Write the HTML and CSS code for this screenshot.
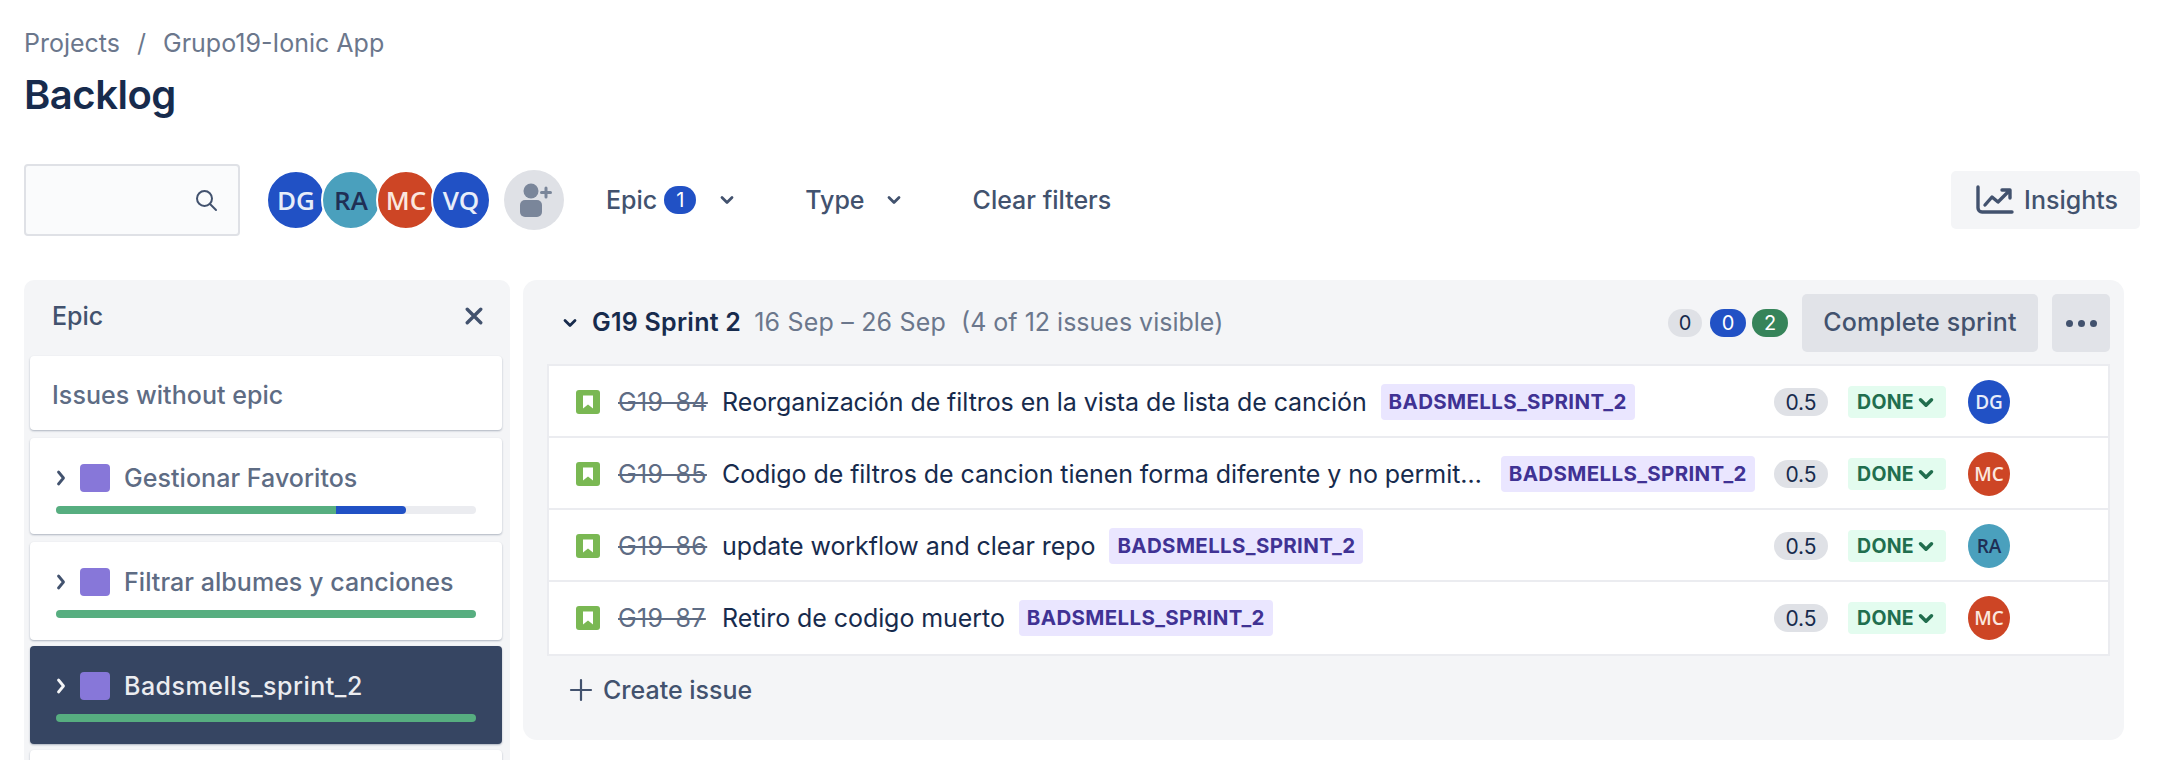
FILE: index.html
```html
<!DOCTYPE html>
<html lang="en">
<head>
<meta charset="utf-8">
<title>Backlog</title>
<link rel="stylesheet" href="styles.css">
</head>
<body>
<div class="page">
  <nav class="crumbs"><span>Projects</span><span class="sep">/</span><span>Grupo19-Ionic App</span></nav>
  <h1 class="title">Backlog</h1>
  <div class="filters">
    <div class="search">
      <svg class="search-icon" viewBox="0 0 24 24"><circle cx="10.5" cy="10.5" r="7.5" fill="none" stroke="#42526e" stroke-width="2"/><path d="M16 16l6 6" stroke="#42526e" stroke-width="2" stroke-linecap="round"/></svg>
    </div>
    <div class="people">
      <span class="face blue">DG</span>
      <span class="face teal">RA</span>
      <span class="face red">MC</span>
      <span class="face blue">VQ</span>
    </div>
    <span class="add-user">
      <svg viewBox="0 0 36 36" width="36" height="36"><circle cx="15" cy="9" r="7.500" fill="#7a869a"/><rect x="4" y="18" width="22" height="17" rx="5" fill="#7a869a"/><path d="M30 6v9M25.500 10.500h9" stroke="#7a869a" stroke-width="3" stroke-linecap="round"/></svg>
    </span>
    <span class="filter epic-filter">Epic<span class="count">1</span>
      <svg class="chev" viewBox="0 0 14 10"><path d="M2 2.500l5 5 5-5" fill="none" stroke="#42526e" stroke-width="2.800" stroke-linecap="round" stroke-linejoin="round"/></svg>
    </span>
    <span class="filter type-filter">Type
      <svg class="chev" viewBox="0 0 14 10"><path d="M2 2.500l5 5 5-5" fill="none" stroke="#42526e" stroke-width="2.800" stroke-linecap="round" stroke-linejoin="round"/></svg>
    </span>
    <span class="filter clear-filter">Clear filters</span>
    <span class="insights">
      <svg viewBox="0 0 38 30" width="38" height="30"><path d="M2 2v21a4 4 0 0 0 4 4h30" fill="none" stroke="#42526e" stroke-width="3.400" stroke-linecap="round"/><path d="M9 20l7-8 6 5 11-11M26 5h8v8" fill="none" stroke="#42526e" stroke-width="3.400" stroke-linecap="round" stroke-linejoin="round"/></svg>
      Insights
    </span>
  </div>
  <div class="board">
    <aside class="epics">
      <div class="epics-head"><span>Epic</span>
        <svg viewBox="0 0 16 16" width="18" height="18"><path d="M2 2l12 12M14 2L2 14" stroke="#42526e" stroke-width="3" stroke-linecap="round"/></svg>
      </div>
      <div class="card card-plain">Issues without epic</div>
      <div class="card card-a">
        <div class="epic-line">
          <svg class="epic-chev" viewBox="0 0 10 16"><path d="M2.500 2l5 6-5 6" fill="none" stroke="#42526e" stroke-width="2.800" stroke-linecap="round" stroke-linejoin="round"/></svg>
          <span class="swatch"></span><span>Gestionar Favoritos</span>
        </div>
        <div class="bar"><span class="bar-done seg-a"></span><span class="bar-prog"></span></div>
      </div>
      <div class="card card-b">
        <div class="epic-line">
          <svg class="epic-chev" viewBox="0 0 10 16"><path d="M2.500 2l5 6-5 6" fill="none" stroke="#42526e" stroke-width="2.800" stroke-linecap="round" stroke-linejoin="round"/></svg>
          <span class="swatch"></span><span>Filtrar albumes y canciones</span>
        </div>
        <div class="bar"><span class="bar-done seg-full"></span></div>
      </div>
      <div class="card card-b card-active">
        <div class="epic-line">
          <svg class="epic-chev" viewBox="0 0 10 16"><path d="M2.500 2l5 6-5 6" fill="none" stroke="#f4f5f7" stroke-width="2.800" stroke-linecap="round" stroke-linejoin="round"/></svg>
          <span class="swatch"></span><span>Badsmells_sprint_2</span>
        </div>
        <div class="bar"><span class="bar-done seg-full"></span></div>
      </div>
      <div class="card card-b"></div>
    </aside>
    <main class="sprint">
      <header class="sprint-head">
        <svg class="sprint-chev" viewBox="0 0 14 10"><path d="M2 2.500l5 5 5-5" fill="none" stroke="#172b4d" stroke-width="2.800" stroke-linecap="round" stroke-linejoin="round"/></svg>
        <strong class="sprint-name">G19 Sprint 2</strong>
        <span class="sprint-dates">16 Sep – 26 Sep</span>
        <span class="sprint-vis">(4 of 12 issues visible)</span>
        <span class="tally tally-grey">0</span>
        <span class="tally tally-blue">0</span>
        <span class="tally tally-green">2</span>
        <span class="btn btn-complete">Complete sprint</span>
        <span class="btn btn-more"><i></i><i></i><i></i></span>
      </header>
      <div class="issues">
        <div class="issue">
          <svg class="story" viewBox="0 0 24 24"><rect width="24" height="24" rx="3" fill="#7ab853"/><path d="M7 5.500h10v13l-5-4-5 4z" fill="#fff"/></svg>
          <span class="key">G19-84</span>
          <span class="summary">Reorganización de filtros en la vista de lista de canción</span>
          <span class="label">BADSMELLS_SPRINT_2</span>
          <span class="points">0.5</span>
          <span class="status">DONE<svg viewBox="0 0 14 10"><path d="M2 2.500l5 5 5-5" fill="none" stroke="#216e4e" stroke-width="3.200" stroke-linecap="round" stroke-linejoin="round"/></svg></span>
          <span class="who blue">DG</span>
        </div>
        <div class="issue">
          <svg class="story" viewBox="0 0 24 24"><rect width="24" height="24" rx="3" fill="#7ab853"/><path d="M7 5.500h10v13l-5-4-5 4z" fill="#fff"/></svg>
          <span class="key">G19-85</span>
          <span class="summary summary-cut">Codigo de filtros de cancion tienen forma diferente y no permit…</span>
          <span class="label">BADSMELLS_SPRINT_2</span>
          <span class="points">0.5</span>
          <span class="status">DONE<svg viewBox="0 0 14 10"><path d="M2 2.500l5 5 5-5" fill="none" stroke="#216e4e" stroke-width="3.200" stroke-linecap="round" stroke-linejoin="round"/></svg></span>
          <span class="who red">MC</span>
        </div>
        <div class="issue">
          <svg class="story" viewBox="0 0 24 24"><rect width="24" height="24" rx="3" fill="#7ab853"/><path d="M7 5.500h10v13l-5-4-5 4z" fill="#fff"/></svg>
          <span class="key">G19-86</span>
          <span class="summary">update workflow and clear repo</span>
          <span class="label">BADSMELLS_SPRINT_2</span>
          <span class="points">0.5</span>
          <span class="status">DONE<svg viewBox="0 0 14 10"><path d="M2 2.500l5 5 5-5" fill="none" stroke="#216e4e" stroke-width="3.200" stroke-linecap="round" stroke-linejoin="round"/></svg></span>
          <span class="who teal">RA</span>
        </div>
        <div class="issue">
          <svg class="story" viewBox="0 0 24 24"><rect width="24" height="24" rx="3" fill="#7ab853"/><path d="M7 5.500h10v13l-5-4-5 4z" fill="#fff"/></svg>
          <span class="key">G19-87</span>
          <span class="summary">Retiro de codigo muerto</span>
          <span class="label">BADSMELLS_SPRINT_2</span>
          <span class="points">0.5</span>
          <span class="status">DONE<svg viewBox="0 0 14 10"><path d="M2 2.500l5 5 5-5" fill="none" stroke="#216e4e" stroke-width="3.200" stroke-linecap="round" stroke-linejoin="round"/></svg></span>
          <span class="who red">MC</span>
        </div>
      </div>
      <div class="create">
        <svg viewBox="0 0 24 24" width="24" height="24"><path d="M12 2v20M2 12h20" stroke="#42526e" stroke-width="2.200" stroke-linecap="round"/></svg>
        <span>Create issue</span>
      </div>
    </main>
  </div>
</div>
</body>
</html>
```
FILE: styles.css
```css
* { box-sizing: border-box; }
html, body { margin: 0; background: #fff; }
body { font-family: Inter, "Liberation Sans", sans-serif; color: #172b4d; }
.page { width: 2166px; height: 760px; overflow: hidden; padding: 27px 26px 0 24px; }

.crumbs { display: flex; gap: 17px; height: 32px; font-size: 25px; line-height: 32px; color: #6b778c; }
.title { margin: 14px 0 0; height: 44px; font-size: 40px; line-height: 44px; font-weight: 600; letter-spacing: -0.5px; }

.filters { display: flex; align-items: center; height: 72px; margin-top: 47px; }
.search { display: flex; align-items: center; justify-content: flex-end; width: 216px; height: 72px; padding-right: 20px; background: #fafbfc; border: 2px solid #dfe1e6; border-radius: 4px; }
.search-icon { width: 24px; height: 24px; }
.people { display: flex; margin-left: 26px; }
.face { display: flex; align-items: center; justify-content: center; width: 60px; height: 60px; margin-right: -5px; border-radius: 50%; border: 2px solid #fff; font: 600 26px "Open Sans", sans-serif; position: relative; }
.blue { background: #2151c5; color: #e8edf9; }
.teal { background: #4aa0bd; color: #1f2f55; }
.red { background: #cd4525; color: #fbe7df; }
.add-user { display: flex; align-items: center; justify-content: center; width: 60px; height: 60px; margin-left: 18px; border-radius: 50%; background: #dfe1e6; }
.filter { display: flex; align-items: center; font-size: 25px; font-weight: 500; color: #42526e; }
.epic-filter { margin-left: 42px; }
.count { display: flex; align-items: center; justify-content: center; width: 32px; height: 28px; margin-left: 7px; border-radius: 14px; background: #2151c5; color: #fff; font-size: 20px; font-weight: 400; }
.chev { width: 14px; height: 10px; }
.epic-filter .chev { margin-left: 24px; }
.type-filter { margin-left: 71px; }
.type-filter .chev { margin-left: 22px; }
.clear-filter { margin-left: 72px; }
.insights { display: flex; align-items: center; gap: 10px; height: 58px; margin-left: auto; padding: 0 22px 0 25px; background: #f4f5f7; border-radius: 5px; font-size: 25px; font-weight: 500; color: #42526e; }

.board { display: flex; gap: 13px; margin-top: 44px; }
.epics { width: 486px; height: 520px; padding: 0 8px 0 6px; background: #f4f5f7; border-radius: 10px 10px 0 0; }
.epics-head { display: flex; align-items: center; justify-content: space-between; height: 72px; margin-bottom: 4px; padding: 0 19px 0 22px; font-size: 25px; font-weight: 500; color: #42526e; }
.card { padding: 0 22px; background: #fff; border-radius: 4px; box-shadow: 0 1px 2px rgba(9, 30, 66, 0.3); font-size: 25px; font-weight: 500; color: #5e6c84; letter-spacing: 0.05px; }
.card-plain { display: flex; align-items: center; height: 74px; margin-bottom: 8px; padding-top: 4px; }
.card-a { height: 96px; margin-bottom: 8px; padding: 26px 26px 0; }
.card-b { height: 98px; margin-bottom: 6px; padding: 26px 26px 0; }
.card-active { background: #364562; color: #ebecf0; letter-spacing: 0.5px; }
.epic-line { display: flex; align-items: center; height: 28px; margin-left: -26px; padding-left: 26px; }
.epic-chev { flex: none; width: 10px; height: 16px; margin-right: 14px; }
.swatch { flex: none; width: 30px; height: 28px; margin-right: 14px; background: #8777d9; border-radius: 4px; }
.bar { display: flex; height: 8px; margin-top: 14px; background: #ebecf0; border-radius: 4px; overflow: hidden; }
.bar-done { background: #57ae80; }
.seg-a { width: 280px; }
.seg-full { width: 100%; }
.bar-prog { width: 70px; background: #2151c5; border-radius: 0 4px 4px 0; }

.sprint { width: 1601px; height: 460px; background: #f4f5f7; border-radius: 14px; }
.sprint-head { display: flex; align-items: center; height: 84px; padding: 14px 14px 12px 40px; font-size: 25px; color: #6b778c; }
.sprint-chev { width: 14px; height: 10px; }
.sprint-name { margin: 0 0 2px 15px; color: #172b4d; font-weight: 600; letter-spacing: 0.25px; }
.sprint-dates { margin: 0 0 2px 13px; letter-spacing: 0.2px; }
.sprint-vis { margin: 0 auto 2px 15px; }
.tally { display: flex; align-items: center; justify-content: center; height: 28px; border-radius: 14px; font-size: 20px; }
.tally-grey { width: 34px; background: #dfe1e6; color: #172b4d; }
.tally-blue { width: 36px; margin-left: 8px; background: #2151c5; color: #fff; }
.tally-green { width: 36px; margin-left: 6px; margin-right: 14px; background: #36845a; color: #fff; }
.btn { display: flex; align-items: center; justify-content: center; height: 58px; background: #e1e3e8; border-radius: 5px; color: #42526e; font-weight: 500; letter-spacing: 0.2px; }
.btn-complete { width: 236px; padding-bottom: 2px; }
.btn-more { gap: 5px; width: 58px; margin-left: 14px; }
.btn-more i { width: 7px; height: 7px; border-radius: 50%; background: #42526e; }

.issues { margin-left: 24px; width: 1563px; border: 2px solid #ebecf0; background: #fff; }
.issue { display: flex; align-items: center; height: 72px; padding: 2px 0 0 27px; border-bottom: 2px solid #ebecf0; font-size: 25px; }
.issue:last-child { padding-top: 0; border-bottom: 0; }
.story { flex: none; width: 24px; height: 24px; }
.key { flex: none; width: 104px; margin-left: 18px; color: #5e6c84; text-decoration: line-through; white-space: nowrap; letter-spacing: 0.4px; }
.summary { flex: none; white-space: nowrap; color: #172b4d; letter-spacing: -0.07px; }
.summary-cut { margin-right: 5px; }
.label { flex: none; height: 36px; margin-left: 14px; padding: 0 8px; background: #eae6ff; border-radius: 4px; color: #403294; font-size: 20.500px; font-weight: 700; line-height: 36px; letter-spacing: 0.35px; }
.points { flex: none; display: flex; align-items: center; justify-content: center; width: 54px; height: 28px; margin-left: auto; border-radius: 14px; background: #dfe1e6; font-size: 21px; }
.status { flex: none; display: flex; align-items: center; gap: 4px; height: 32px; width: 98px; margin-left: 20px; padding-left: 9px; background: #e3fcef; border-radius: 4px; color: #216e4e; font-size: 19.500px; font-weight: 700; letter-spacing: 0.3px; }
.status svg { width: 16px; height: 11px; }
.who { flex: none; display: flex; align-items: center; justify-content: center; width: 42px; height: 44px; margin-left: 22px; margin-right: 98px; border-radius: 50%; font: 600 19px "Open Sans", sans-serif; }

.create { display: flex; align-items: center; gap: 10px; height: 68px; padding-left: 46px; font-size: 25px; font-weight: 500; color: #42526e; }
```
